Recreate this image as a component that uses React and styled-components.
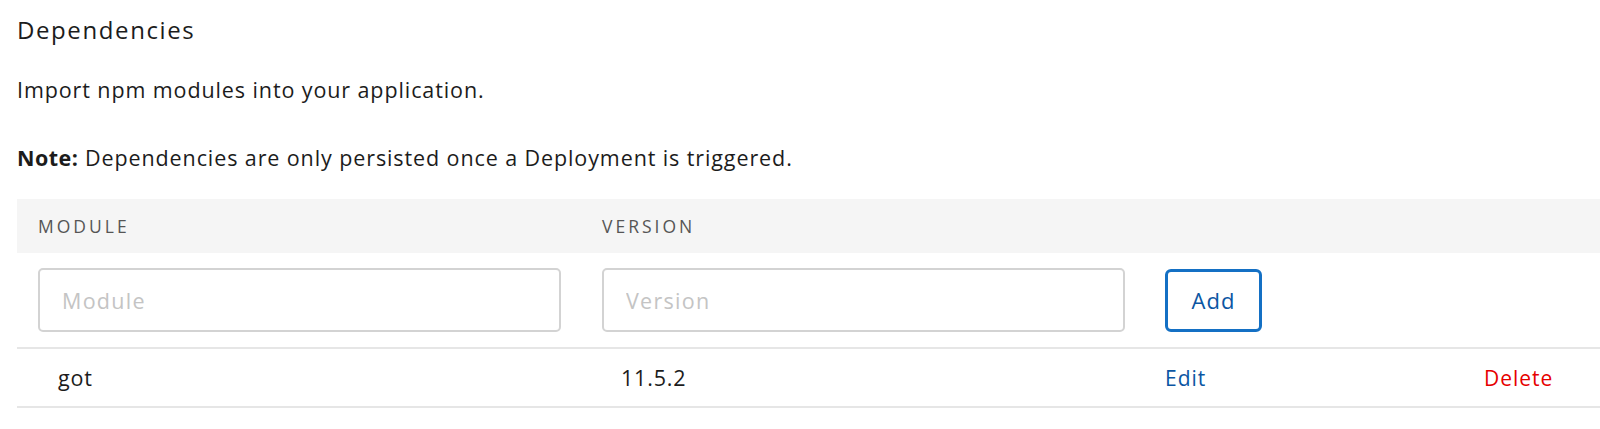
import React from "react";
import styled, { createGlobalStyle } from "styled-components";

const GlobalStyle = createGlobalStyle`
  body {
    margin: 0;
    background: #ffffff;
    font-family: "Open Sans", "Liberation Sans", sans-serif;
    color: #1f1f1f;
  }
`;

const Page = styled.div`
  padding: 16px 0 0 17px;
  overflow: hidden;
`;

const Title = styled.h2`
  margin: 0;
  font-size: 24px;
  font-weight: 400;
  line-height: 28px;
  letter-spacing: 1.6px;
  color: #1c1c1c;
`;

const Text = styled.p`
  margin: ${(p) => p.$top}px 0 0;
  font-size: 21.5px;
  line-height: 28px;
  letter-spacing: 0.9px;
  color: #1c1c1c;
  strong {
    font-weight: 700;
    letter-spacing: 0.5px;
  }
`;

const Table = styled.div`
  margin-top: 27px;
  width: 1620px;
`;

const Row = styled.div`
  display: grid;
  grid-template-columns: 564px 563px 319px 1fr;
  align-items: center;
  height: ${(p) => p.$height}px;
  background: ${(p) => p.$bg || "transparent"};
  border-bottom: ${(p) => (p.$line ? "2px solid #e6e6e6" : "none")};
`;

const Label = styled.div`
  padding-left: 21px;
  font-size: 17.5px;
  letter-spacing: 3px;
  text-transform: uppercase;
  color: #555;
`;

const Cell = styled.div`
  padding-left: ${(p) => p.$indent || 21}px;
  font-size: 21.5px;
  letter-spacing: 0.8px;
  color: #1c1c1c;
`;

const Input = styled.input`
  box-sizing: border-box;
  width: 523px;
  height: 64px;
  border: 2px solid #d3d3d3;
  border-radius: 5px;
  padding: 0 22px;
  font-family: inherit;
  font-size: 21.5px;
  letter-spacing: 1.3px;
  color: #1c1c1c;
  outline: none;
  &::placeholder {
    color: #c4c4c4;
  }
`;

const AddButton = styled.button`
  box-sizing: border-box;
  width: 97px;
  height: 63px;
  border: 3px solid #1470c4;
  border-radius: 6px;
  background: #fff;
  font-family: inherit;
  font-size: 22px;
  font-weight: 500;
  letter-spacing: 1px;
  color: #0b56a3;
  cursor: pointer;
`;

const Action = styled.a`
  font-size: 21px;
  letter-spacing: 1px;
  color: ${(p) => (p.$danger ? "#e60000" : "#0b56a3")};
  text-decoration: none;
  cursor: pointer;
`;

export default function App() {
  return (
    <>
      <GlobalStyle />
      <Page>
        <Title>Dependencies</Title>
        <Text $top={32}>Import npm modules into your application.</Text>
        <Text $top={40}>
          <strong>Note:</strong> Dependencies are only persisted once a
          Deployment is triggered.
        </Text>
        <Table>
          <Row $height={54} $bg="#f5f5f5">
            <Label>Module</Label>
            <Label>Version</Label>
            <div />
            <div />
          </Row>
          <Row $height={94} $line>
            <Cell>
              <Input placeholder="Module" />
            </Cell>
            <Cell>
              <Input placeholder="Version" />
            </Cell>
            <Cell>
              <AddButton>Add</AddButton>
            </Cell>
            <div />
          </Row>
          <Row $height={57} $line>
            <Cell $indent={41}>got</Cell>
            <Cell $indent={40}>11.5.2</Cell>
            <Cell>
              <Action>Edit</Action>
            </Cell>
            <Cell>
              <Action $danger>Delete</Action>
            </Cell>
          </Row>
        </Table>
      </Page>
    </>
  );
}
